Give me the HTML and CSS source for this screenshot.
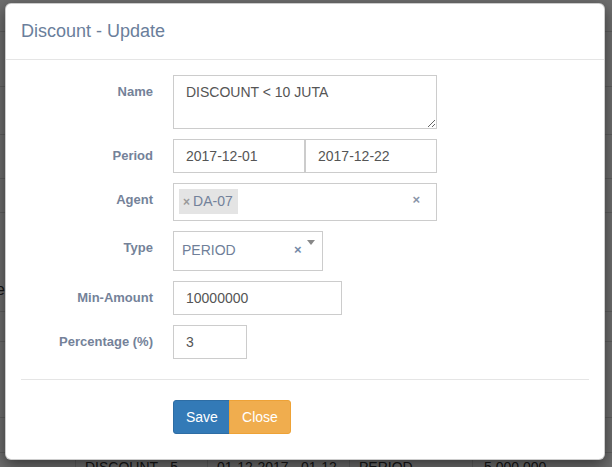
FILE: index.html
```html
<!DOCTYPE html>
<html>
<head>
<meta charset="utf-8">
<link rel="stylesheet" href="styles.css">
</head>
<body>
<div class="page">
  <div class="bg-row h31"></div>
  <div class="bg-row h55"></div>
  <div class="bg-row h48"></div>
  <div class="bg-row h44"></div>
  <div class="bg-row h34"></div>
  <div class="bg-row h99"><span class="edge-text">e</span></div>
  <div class="bg-row h30"></div>
  <div class="bg-row h76"></div>
  <div class="bg-row h35"></div>
  <div class="bg-table-row">
    <div class="cell c0"></div>
    <div class="cell c1">DISCOUNT - 5</div>
    <div class="cell c2">01-12-2017 - 01-12</div>
    <div class="cell c3">PERIOD</div>
    <div class="cell c4">5.000.000</div>
  </div>
</div>
<div class="backdrop"></div>
<div class="modal">
  <div class="modal-header">
    <h4 class="modal-title">Discount - Update</h4>
  </div>
  <div class="modal-body">
    <div class="form-row">
      <label class="control-label">Name</label>
      <textarea class="form-control textarea" readonly>DISCOUNT &lt; 10 JUTA</textarea>
    </div>
    <div class="form-row">
      <label class="control-label">Period</label>
      <div class="pair">
        <input class="form-control" value="2017-12-01" readonly>
        <input class="form-control" value="2017-12-22" readonly>
      </div>
    </div>
    <div class="form-row">
      <label class="control-label">Agent</label>
      <div class="select-multi">
        <span class="choice"><span class="choice-x">×</span>DA-07</span>
        <span class="multi-clear">×</span>
      </div>
    </div>
    <div class="form-row">
      <label class="control-label">Type</label>
      <div class="select-single">
        <span class="single-value">PERIOD</span>
        <span class="single-clear">×</span>
        <span class="single-arrow"></span>
      </div>
    </div>
    <div class="form-row">
      <label class="control-label">Min-Amount</label>
      <input class="form-control w-amount" value="10000000" readonly>
    </div>
    <div class="form-row">
      <label class="control-label">Percentage (%)</label>
      <input class="form-control w-pct" value="3" readonly>
    </div>
    <hr class="divider">
    <div class="form-row">
      <span></span>
      <div class="btn-group">
        <button class="btn btn-primary">Save</button>
        <button class="btn btn-warning">Close</button>
      </div>
    </div>
  </div>
</div>
</body>
</html>
```

FILE: styles.css
```css
* { box-sizing: border-box; }
html, body { margin: 0; padding: 0; }
body {
  width: 612px;
  height: 467px;
  overflow: hidden;
  background: #ffffff;
  font-family: "Liberation Sans", Arial, sans-serif;
  font-size: 14px;
  color: #333;
  position: relative;
}

/* background page */
.page { width: 612px; }
.bg-row { border-bottom: 1px solid #ddd; position: relative; }
.h31 { height: 32px; }
.h55 { height: 55px; }
.h48 { height: 48px; }
.h44 { height: 44px; }
.h34 { height: 34px; }
.h99 { height: 99px; }
.h30 { height: 30px; }
.h76 { height: 76px; }
.h35 { height: 35px; }
.edge-text { position: absolute; left: -4px; top: 68px; font-size: 16px; color: #333; }
.bg-table-row { display: flex; height: 30px; }
.cell { border-right: 1px solid #ddd; padding: 6px 9px; color: #333; font-size: 14px; white-space: nowrap; overflow: hidden; }
.c0 { width: 76px; }
.c1 { width: 132px; }
.c2 { width: 142px; }
.c3 { width: 123px; }
.c4 { flex: 1; border-right: none; padding-left: 11px; }

.backdrop {
  position: absolute;
  inset: 0;
  background: rgba(0, 0, 0, 0.57);
}

/* modal */
.modal {
  position: absolute;
  left: 5px;
  top: 3px;
  width: 600px;
  background: #fff;
  border: 1px solid rgba(0, 0, 0, 0.2);
  border-radius: 6px;
  box-shadow: 0 5px 15px rgba(0, 0, 0, 0.5);
}
.modal-header {
  padding: 15px;
  border-bottom: 1px solid #e5e5e5;
}
.modal-title {
  margin: 0;
  font-size: 18px;
  font-weight: normal;
  line-height: 25px;
  color: #6a7e9b;
}
.modal-body {
  padding: 15px;
}
.form-row {
  display: grid;
  grid-template-columns: 132px 264px;
  column-gap: 20px;
  align-items: start;
  margin-bottom: 10px;
}
.control-label {
  text-align: right;
  font-weight: bold;
  font-size: 13px;
  line-height: 18px;
  padding-top: 8px;
  color: #748299;
  white-space: nowrap;
}
.form-control {
  display: block;
  width: 100%;
  height: 34px;
  padding: 6px 12px;
  font-family: "Liberation Sans", Arial, sans-serif;
  font-size: 14px;
  line-height: 20px;
  color: #555;
  background: #fff;
  border: 1px solid #ccc;
  border-radius: 0;
  outline: none;
  margin: 0;
}
.textarea {
  height: 54px;
  resize: vertical;
  overflow: hidden;
}
.pair { display: flex; }
.pair .form-control { width: 132px; }
.w-amount { width: 169px; }
.w-pct { width: 74px; }

.select-multi {
  position: relative;
  height: 38px;
  border: 1px solid #ccc;
  padding: 5px;
}
.choice {
  display: inline-block;
  height: 25px;
  line-height: 25px;
  padding: 0 5px 0 4px;
  background: #e4e4e4;
  color: #72819a;
  font-size: 14px;
}
.choice-x {
  color: #999;
  font-weight: bold;
  font-size: 12px;
  margin-right: 3px;
}
.multi-clear {
  position: absolute;
  right: 16px;
  top: 8px;
  font-weight: bold;
  font-size: 13px;
  color: #8a95a8;
}

.select-single {
  position: relative;
  width: 150px;
  height: 40px;
  border: 1px solid #ccc;
  padding: 0 8px;
}
.single-value {
  line-height: 37px;
  color: #6f7f99;
  font-size: 14px;
}
.single-clear {
  position: absolute;
  left: 120px;
  top: 10px;
  font-weight: bold;
  font-size: 13px;
  color: #7389a8;
}
.single-arrow {
  position: absolute;
  left: 133px;
  top: 8px;
  width: 0;
  height: 0;
  border-style: solid;
  border-width: 5px 4px 0 4px;
  border-color: #888 transparent transparent transparent;
}

.divider {
  margin: 20px 0 20px;
  border: 0;
  border-top: 1px solid #e5e5e5;
  height: 0;
}

.btn-group { display: flex; }
.btn {
  height: 34px;
  padding: 6px 12px;
  font-family: "Liberation Sans", Arial, sans-serif;
  font-size: 14px;
  line-height: 20px;
  color: #fff;
  border: 1px solid transparent;
  margin: 0;
}
.btn-primary {
  width: 57px;
  background: #337ab7;
  border-color: #2e6da4;
  border-radius: 3px 0 0 3px;
}
.btn-warning {
  width: 62px;
  margin-left: -1px;
  background: #f0ad4e;
  border-color: #eea236;
  border-radius: 0 3px 3px 0;
}
```
